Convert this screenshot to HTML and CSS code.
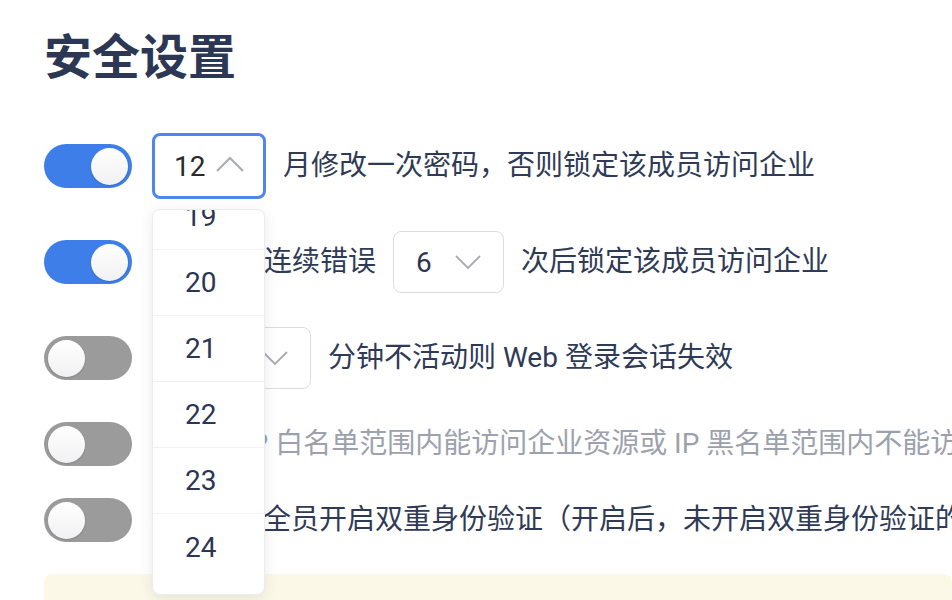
FILE: index.html
```html
<!DOCTYPE html>
<html lang="zh-CN">
<head>
<meta charset="utf-8">
<title>安全设置</title>
<link rel="stylesheet" href="styles.css">
</head>
<body>
<div class="page">
  <h1 class="title">安全设置</h1>
  <div class="rows">
    <div class="row row-tall">
      <span class="toggle on"><span class="knob"></span></span>
      <div class="select select-open">
        <span class="select-value">12</span>
        <svg class="chev" width="28" height="16" viewBox="0 0 28 16"><path d="M1 15 L14 2 L27 15" fill="none" stroke="#a9abb0" stroke-width="2"/></svg>
        <div class="menu">
          <div class="menu-list">
            <div class="menu-item">19</div>
            <div class="menu-item">20</div>
            <div class="menu-item">21</div>
            <div class="menu-item">22</div>
            <div class="menu-item">23</div>
            <div class="menu-item">24</div>
          </div>
        </div>
      </div>
      <span class="label">月修改一次密码，否则锁定该成员访问企业</span>
    </div>
    <div class="row row-tall">
      <span class="toggle on"><span class="knob"></span></span>
      <span class="label label-first">输入密码连续错误</span>
      <div class="select select-small select-gap">
        <span class="select-value dark">6</span>
        <svg class="chev" width="26" height="15" viewBox="0 0 26 15"><path d="M1 1 L13 13 L25 1" fill="none" stroke="#a9abb0" stroke-width="1.8"/></svg>
      </div>
      <span class="label">次后锁定该成员访问企业</span>
    </div>
    <div class="row row-tall">
      <span class="toggle"><span class="knob"></span></span>
      <div class="select select-small select-shift">
        <span class="select-value dark">30</span>
        <svg class="chev" width="26" height="15" viewBox="0 0 26 15"><path d="M1 1 L13 13 L25 1" fill="none" stroke="#a9abb0" stroke-width="1.8"/></svg>
      </div>
      <span class="label">分钟不活动则 Web 登录会话失效</span>
    </div>
    <div class="row row-short">
      <span class="toggle"><span class="knob"></span></span>
      <span class="label label-muted label-ip">仅允许 IP 白名单范围内能访问企业资源或 IP 黑名单范围内不能访问企业资源</span>
    </div>
    <div class="row row-short">
      <span class="toggle"><span class="knob"></span></span>
      <span class="label label-mfa">强制要求全员开启双重身份验证（开启后，未开启双重身份验证的成员将无法访问企业）</span>
    </div>
  </div>
  <div class="notice">提示：以上设置修改后将立即对企业内所有成员生效</div>
</div>
</body>
</html>
```
FILE: styles.css
```css
* { box-sizing: border-box; }
html, body {
  margin: 0;
  padding: 0;
  background: #ffffff;
  overflow: hidden;
  width: 952px;
  height: 600px;
}
body {
  font-family: Roboto, "Noto Sans CJK SC", sans-serif;
  color: #2f3a56;
}
.page {
  padding: 26px 0 0 44px;
}
.title {
  margin: 0 0 52px 0;
  font-family: "Noto Sans CJK SC", sans-serif;
  font-size: 48px;
  line-height: 55px;
  font-weight: 700;
  color: #2c3853;
}
.rows {
  display: flex;
  flex-direction: column;
  gap: 30px;
}
.row {
  display: flex;
  align-items: center;
  white-space: nowrap;
}
.row-tall { height: 66px; }
.row-short { height: 46px; }
.toggle {
  flex: none;
  width: 88px;
  height: 44px;
  border-radius: 22px;
  background: #9b9b9b;
  display: flex;
  align-items: center;
  padding: 0 4px;
}
.toggle.on {
  background: #3e7ee8;
  justify-content: flex-end;
}
.knob {
  width: 37px;
  height: 37px;
  border-radius: 50%;
  background: linear-gradient(180deg, #ffffff 0%, #f1f1f3 100%);
  box-shadow: 0 1px 2px rgba(0,0,0,0.15);
}
.select {
  position: relative;
  flex: none;
  display: flex;
  align-items: center;
  border-radius: 8px;
  background: #fff;
}
.select-open {
  margin-left: 20px;
  width: 114px;
  height: 66px;
  border: 3px solid #4d87ee;
  padding-left: 19px;
}
.select-small {
  width: 111px;
  height: 62px;
  border: 1.5px solid #dcdde0;
  padding-left: 22px;
}
.select-gap { margin-left: 17px; }
.select-shift { margin-left: 68px; }
.select-value {
  font-size: 28px;
  color: #2a2a2c;
  width: 42px;
}
.select-value.dark { color: #2d3555; }
.select-small .select-value { width: 39px; }
.chev { display: block; }
.select-open .chev { margin-top: -4px; }
.label {
  font-size: 28px;
  line-height: 40px;
  color: #2f3a56;
  margin-left: 17px;
}
.label-first { margin-left: 20px; }
.label-muted { color: #9ca1ad; }
.label-ip { margin-left: 20px; }
.label-mfa { margin-left: 19px; }
.menu {
  position: absolute;
  left: -3px;
  top: 73px;
  width: 113px;
  height: 386px;
  background: #fff;
  border: 1px solid #ececef;
  border-radius: 8px;
  box-shadow: 0 3px 14px rgba(30, 40, 70, 0.10);
  overflow: hidden;
  z-index: 10;
}
.menu-list {
  margin-top: -26px;
}
.menu-item {
  height: 66px;
  display: flex;
  align-items: center;
  padding-left: 32px;
  font-size: 28px;
  color: #2d3555;
  border-bottom: 1px solid #f2f2f5;
}
.menu-item:last-child { border-bottom: none; }
.notice {
  margin-top: 31px;
  background: #fbf8e7;
  border-radius: 8px;
  padding: 23px 0 20px 40px;
  font-size: 26px;
  color: #6b6f78;
  white-space: nowrap;
}
```
